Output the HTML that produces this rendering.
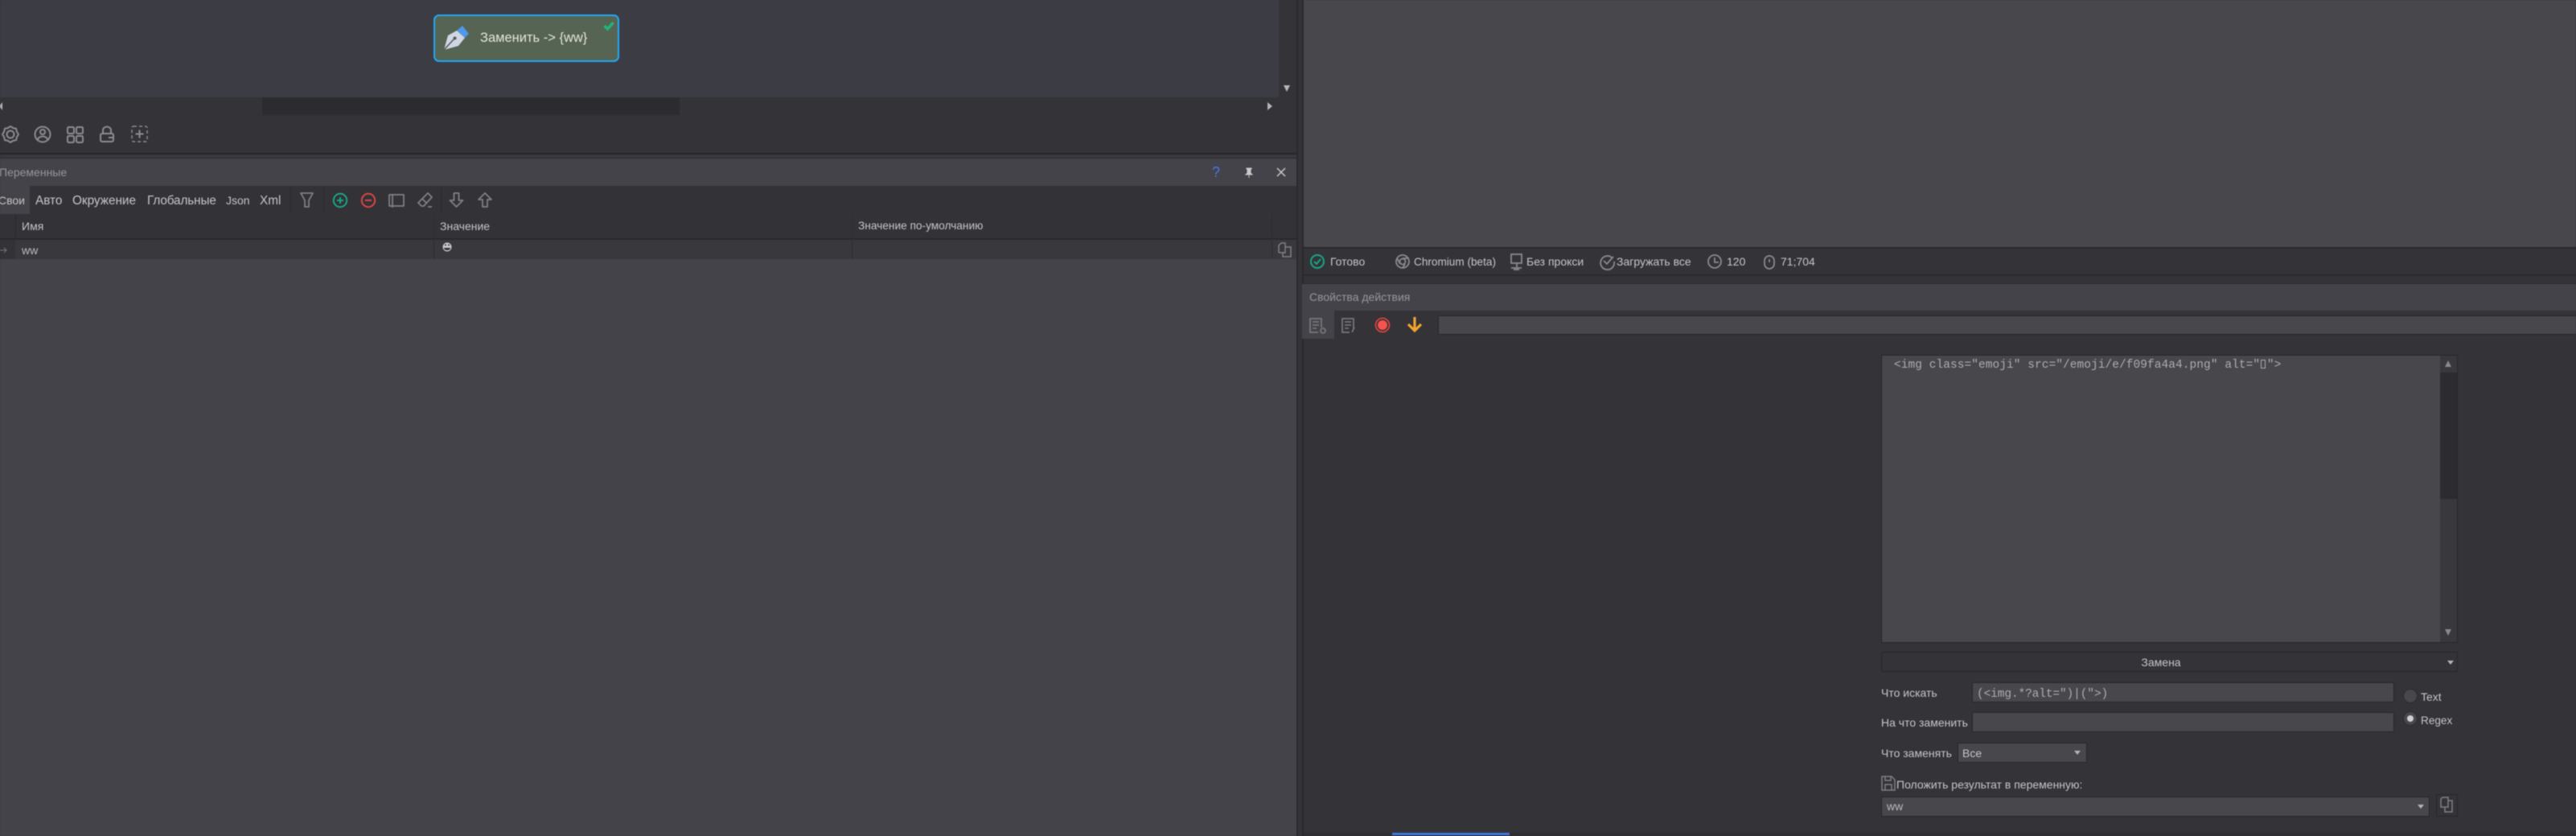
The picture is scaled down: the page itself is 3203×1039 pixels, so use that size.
<!DOCTYPE html>
<html><head><meta charset="utf-8"><style>
html,body{margin:0;padding:0;background:#333338}
#r{position:relative;width:3203px;height:1039px;overflow:hidden;background:#333338;font-family:"Liberation Sans",sans-serif;font-size:14px;color:#c6c6c6;filter:blur(.4px)}
#r div{position:absolute}
.t{position:absolute;white-space:nowrap;line-height:20px;height:20px}
.tab{font-size:15.300px}
.m{font-family:"Liberation Mono",monospace;color:#aeaeae;font-size:14.5px}
svg{position:absolute;overflow:visible}
.f{background:#47474c;border:1px solid #28282c;box-sizing:border-box}
.c{background:#333338;border:1px solid #28282c;box-sizing:border-box}
.box{display:inline-block;width:6px;height:11px;border:1px solid #aeaeae;box-sizing:border-box;margin:0 1.400px;vertical-align:-1px}
</style></head><body><div id="r">
<!-- canvas -->
<div style="left:0;top:0;width:1590px;height:121px;background:#3c3c45"></div>
<div style="left:1590px;top:0;width:22px;height:143px;background:#333338"></div>
<div style="left:0;top:121px;width:1590px;height:22px;background:#333338"></div>
<div style="left:326px;top:121px;width:519px;height:22px;background:#2b2b30"></div>
<svg style="left:0;top:0" width="1620" height="200"><path d="M1596 106h8l-4 8zM1576 127v10l6-5zM3 127v10l-4-5z" fill="#b5b5b5"/><g fill="#8a8a8e"><rect x="1581" y="165" width="3" height="3"/><rect x="1589" y="165" width="3" height="3"/><rect x="1597" y="165" width="3" height="3"/></g></svg>
<!-- node -->
<div style="left:539px;top:18px;width:231px;height:59px;box-sizing:border-box;background:#566453;border:2.500px solid #22a9f5;border-radius:7px"></div>
<svg style="left:0;top:0" width="800" height="80"><path d="M552 62L557 44 568 38 578 47 570 57z" fill="#d0d6e2"/><path d="M568 38L575 32 583 42 578 47z" fill="#4f98ea"/><path d="M552 62L565 48" stroke="#55555e" stroke-width="1.500"/><circle cx="565.500" cy="47.500" r="2" fill="#55555e"/><path d="M751.500 32l4 4 7-8" stroke="#24b27f" stroke-width="3.600" fill="none"/></svg>
<span class="t" style="left:597px;top:37px;font-size:16.500px;color:#e4e4dc">Заменить -&gt; {ww}</span>
<!-- bottom canvas toolbar -->
<div style="left:0;top:143px;width:1612px;height:48px;background:#333338"></div>
<svg style="left:0;top:150px" width="200" height="34" fill="none" stroke="#8c8c90" stroke-width="2" stroke-linejoin="round"><path d="M23 17L20.900 20.300 20.100 24.100 16.300 24.900 13 27 9.700 24.900 5.900 24.100 5.100 20.300 3 17 5.100 13.700 5.900 9.900 9.700 9.100 13 7 16.300 9.100 20.100 9.900 20.900 13.700z"/><circle cx="13" cy="17" r="4.500"/><circle cx="53" cy="17" r="9.500"/><circle cx="53" cy="14" r="3"/><path d="M46.500 24c2-6 11-6 13 0"/><rect x="84" y="8" width="8" height="8" rx="1.500"/><rect x="95" y="8" width="8" height="8" rx="1.500"/><rect x="84" y="19" width="8" height="8" rx="1.500"/><rect x="95" y="19" width="8" height="8" rx="1.500"/><rect x="125" y="16" width="16" height="10" rx="2"/><path d="M128 16v-4c0-6 10-6 10 0v4M135 21h6"/><rect x="164" y="7" width="19" height="19" rx="2" stroke-dasharray="4 3" stroke-width="1.500"/><path d="M173.500 11.500v10M168.500 16.500h10"/></svg>
<div style="left:0;top:190px;width:1612px;height:2px;background:#252529"></div>
<div style="left:0;top:192px;width:1612px;height:5px;background:#38383d;border-bottom:1px solid #29292d;box-sizing:border-box"></div>
<!-- variables panel -->
<div style="left:0;top:197px;width:1612px;height:842px;background:#434349"></div>
<span class="t" style="left:-1px;top:204px;color:#96969a">Переменные</span>
<svg style="left:1500px;top:204px" width="110" height="20"><text x="12" y="16" font-size="18" fill="#4a76e8" font-family="Liberation Sans" text-anchor="middle">?</text><path d="M50 5h6v1h-1v5l2 2h-8l2-2V6h-1zM53 13v4" fill="#c8c8c8" stroke="#c8c8c8"/><path d="M88 5l10 10M98 5L88 15" stroke="#c8c8c8" stroke-width="1.500"/></svg>
<div style="left:0;top:231px;width:1612px;height:35px;background:#323237"></div>
<div style="left:0;top:231px;width:37px;height:35px;background:#434349"></div>
<span class="t" style="left:-2px;top:239px">Свои</span>
<span class="t tab" style="left:44px;top:240px">Авто</span>
<span class="t tab" style="left:90px;top:240px">Окружение</span>
<span class="t tab" style="left:183px;top:240px;letter-spacing:-.1px">Глобальные</span>
<span class="t" style="left:281px;top:239px">Json</span>
<span class="t tab" style="left:323px;top:240px">Xml</span>
<div style="left:361px;top:233px;width:1px;height:31px;background:#2a2a2e"></div>
<div style="left:402px;top:233px;width:1px;height:31px;background:#2a2a2e"></div>
<div style="left:548px;top:233px;width:1px;height:31px;background:#2a2a2e"></div>
<svg style="left:370px;top:236px" width="250" height="28" fill="none" stroke="#808084" stroke-width="1.800" stroke-linejoin="round"><path d="M4 4h15l-5 9v8h-5v-8z"/><circle cx="53" cy="13" r="8.200" stroke="#1aa585" stroke-width="2"/><path d="M49 13h8M53 9v8" stroke="#1aa585" stroke-width="2"/><circle cx="88" cy="13" r="8.200" stroke="#dd4545" stroke-width="2"/><path d="M84 13h8" stroke="#dd4545" stroke-width="2"/><rect x="114" y="6" width="18" height="14"/><path d="M118 5v17"/><path d="M150 16L162 4l5 5-10 11h-3zM155 11l5 5M162 21h5"/><path d="M194.500 4h6v9h5l-8 8-8-8h5zM230 21h6v-9h5l-8-8-8 8h5z"/></svg>
<div style="left:0;top:266px;width:1612px;height:30px;background:#323237"></div>
<div style="left:0;top:296px;width:1612px;height:2px;background:#29292d"></div>
<div style="left:19px;top:298px;width:1593px;height:24px;background:#38383d"></div>
<div style="left:0;top:298px;width:19px;height:24px;background:#323237"></div>
<div style="left:19px;top:266px;width:1px;height:30px;background:#29292d"></div>
<div style="left:539px;top:266px;width:1px;height:56px;background:#2d2d32"></div>
<div style="left:1059px;top:266px;width:1px;height:56px;background:#2d2d32"></div>
<div style="left:1581px;top:266px;width:1px;height:56px;background:#2d2d32"></div>
<span class="t" style="left:27px;top:271px">Имя</span>
<span class="t" style="left:547px;top:271px">Значение</span>
<span class="t" style="left:1067px;top:271px;font-size:13.700px">Значение по-умолчанию</span>
<span class="t" style="left:27px;top:301px;color:#bdbdbd">ww</span>
<svg style="left:0;top:304px" width="10" height="14"><path d="M0 7h8M5 4l3 3-3 3" stroke="#77777b" fill="none"/></svg>
<svg style="left:550px;top:300px" width="14" height="14"><circle cx="6" cy="7" r="5.500" fill="#c9c9cb"/><path d="M2 8h8c0 4-8 4-8 0z" fill="#333"/><circle cx="4" cy="4.500" r="1" fill="#333"/><circle cx="8" cy="4.500" r="1" fill="#333"/></svg>
<svg style="left:1588px;top:300px" width="20" height="22" fill="none" stroke="#808084" stroke-width="1.500"><path d="M2 14V5l3-3h5v12H2M10 7h7v12H7v-5"/></svg>
<!-- splitter -->
<div style="left:1612px;top:0;width:2px;height:1039px;background:#2a2a2e"></div>
<div style="left:1614px;top:0;width:5px;height:1039px;background:#333338"></div>
<div style="left:1619px;top:0;width:2px;height:1039px;background:#2a2a2e"></div>
<!-- right top -->
<div style="left:1621px;top:0;width:1582px;height:307px;background:#47474c"></div>
<div style="left:1621px;top:307px;width:1582px;height:2px;background:#29292d"></div>
<div style="left:1621px;top:309px;width:1582px;height:32px;background:#333338"></div>
<div style="left:1621px;top:341px;width:1582px;height:2px;background:#29292d"></div>
<svg style="left:1625px;top:311px" width="600" height="30" fill="none" stroke="#8a8a8e" stroke-width="1.800"><circle cx="13" cy="14" r="8" stroke="#1aa585" stroke-width="2"/><path d="M9 14l3 3 5-6" stroke="#1aa585" stroke-width="2"/><circle cx="119" cy="14" r="8"/><circle cx="119" cy="14" r="3.500"/><path d="M119 10h8M116 17l-4-7M122 17l-3 5"/><rect x="254" y="5" width="13" height="11"/><path d="M261 16v5M254 22h13M257 24h7"/><path d="M379 9a8.500 8.500 0 1 0 3 5M369 13l4 4 8-9"/><circle cx="507" cy="14" r="8"/><path d="M507 9v6h5"/><rect x="569" y="7" width="12" height="16" rx="6"/><path d="M575 11v4"/></svg>
<span class="t" style="left:1654px;top:315px">Готово</span>
<span class="t" style="left:1758px;top:316px;font-size:13.600px">Chromium (beta)</span>
<span class="t" style="left:1898px;top:315px">Без прокси</span>
<span class="t" style="left:2010px;top:315px">Загружать все</span>
<span class="t" style="left:2147px;top:315px">120</span>
<span class="t" style="left:2214px;top:315px">71;704</span>
<div style="left:1621px;top:343px;width:1582px;height:9px;background:#333338"></div>
<!-- properties -->
<div style="left:1619px;top:352px;width:1584px;height:34px;background:#434349;border-top:1px solid #29292d;box-sizing:border-box"></div>
<span class="t" style="left:1628px;top:359px;color:#96969a">Свойства действия</span>
<div style="left:1619px;top:386px;width:40px;height:35px;background:#434349"></div>
<div class="f" style="left:1788px;top:392px;width:1416px;height:24px"></div>
<svg style="left:1625px;top:389px" width="150" height="30" fill="none" stroke="#77777b" stroke-width="1.800"><path d="M18 18V7H4v17h10M7 11h8M7 15h8M7 19h5"/><circle cx="20" cy="22" r="3"/><path d="M58 20V7H44v17h9M47 11h8M47 15h8M47 19h5M59 18l-3 6"/><circle cx="94" cy="15" r="8.500" stroke="#d8433f" stroke-width="1.800"/><circle cx="94" cy="15" r="6" fill="#f5544e" stroke="none"/><path d="M134 5v17M126 14l8 8 8-8" stroke="#f2a52c" stroke-width="3.200"/></svg>
<!-- textarea -->
<div class="f" style="left:2339px;top:441px;width:717px;height:358px"></div>
<div style="left:3034px;top:442px;width:21px;height:356px;background:#38383d"></div>
<div style="left:3034px;top:463px;width:21px;height:157px;background:#2b2b30"></div>
<svg style="left:3034px;top:442px" width="20" height="356"><path d="M6 14l4-8 4 8zM6 340l4 8 4-8z" fill="#8a8a8e"/></svg>
<span class="t m" style="left:2355px;top:444px;letter-spacing:.05px">&lt;img class="emoji" src="/emoji/e/f09fa4a4.png" alt="<span class="box"></span>"&gt;</span>
<div class="c" style="left:2339px;top:810px;width:717px;height:25px"></div>
<span class="t" style="left:2687px;top:813px;transform:translateX(-50%)">Замена</span>
<span class="t" style="left:2339px;top:851px">Что искать</span>
<span class="t" style="left:2339px;top:888px">На что заменить</span>
<span class="t" style="left:2339px;top:926px">Что заменять</span>
<div class="f" style="left:2452px;top:848px;width:525px;height:25px"></div>
<div class="f" style="left:2452px;top:885px;width:525px;height:25px"></div>
<span class="t m" style="left:2458px;top:853px;letter-spacing:-.12px">(&lt;img.*?alt=")|("&gt;)</span>
<svg style="left:2988px;top:856px" width="20" height="50"><circle cx="9" cy="9" r="8.500" fill="#47474c" stroke="#2c2c30"/><circle cx="9" cy="37" r="8.500" fill="#47474c" stroke="#2c2c30"/><circle cx="9" cy="37" r="4" fill="#d0d0d0"/></svg>
<span class="t" style="left:3010px;top:856px">Text</span>
<span class="t" style="left:3010px;top:886px;font-size:13.600px">Regex</span>
<div class="f" style="left:2434px;top:923px;width:161px;height:25px"></div>
<span class="t" style="left:2440px;top:926px">Все</span>
<svg style="left:2339px;top:964px" width="18" height="19" fill="none" stroke="#808084" stroke-width="1.500"><path d="M1 1h12l4 4v13H1zM5 1v5h7V1M5 18v-7h8v7"/></svg>
<span class="t" style="left:2358px;top:965px">Положить результат в переменную:</span>
<div class="f" style="left:2339px;top:990px;width:682px;height:25px"></div>
<span class="t" style="left:2346px;top:992px;color:#bdbdbd">ww</span>
<div class="c" style="left:3029px;top:987px;width:27px;height:28px"></div>
<svg style="left:2300px;top:780px" width="903" height="259"><path d="M743 41l4 5 4-5zM279 153l4 5 4-5zM706 220l4 5 4-5z" fill="#b5b5b5"/><g fill="none" stroke="#808084" stroke-width="1.500"><path d="M735 223v-10l2-2h7v12zM744 215h5v14h-9v-6"/></g></svg>
<div style="left:1621px;top:1035px;width:1582px;height:4px;background:#2e2e33"></div>
<div style="left:1731px;top:1035px;width:146px;height:3px;background:#3e78e0"></div>
</div></body></html>
